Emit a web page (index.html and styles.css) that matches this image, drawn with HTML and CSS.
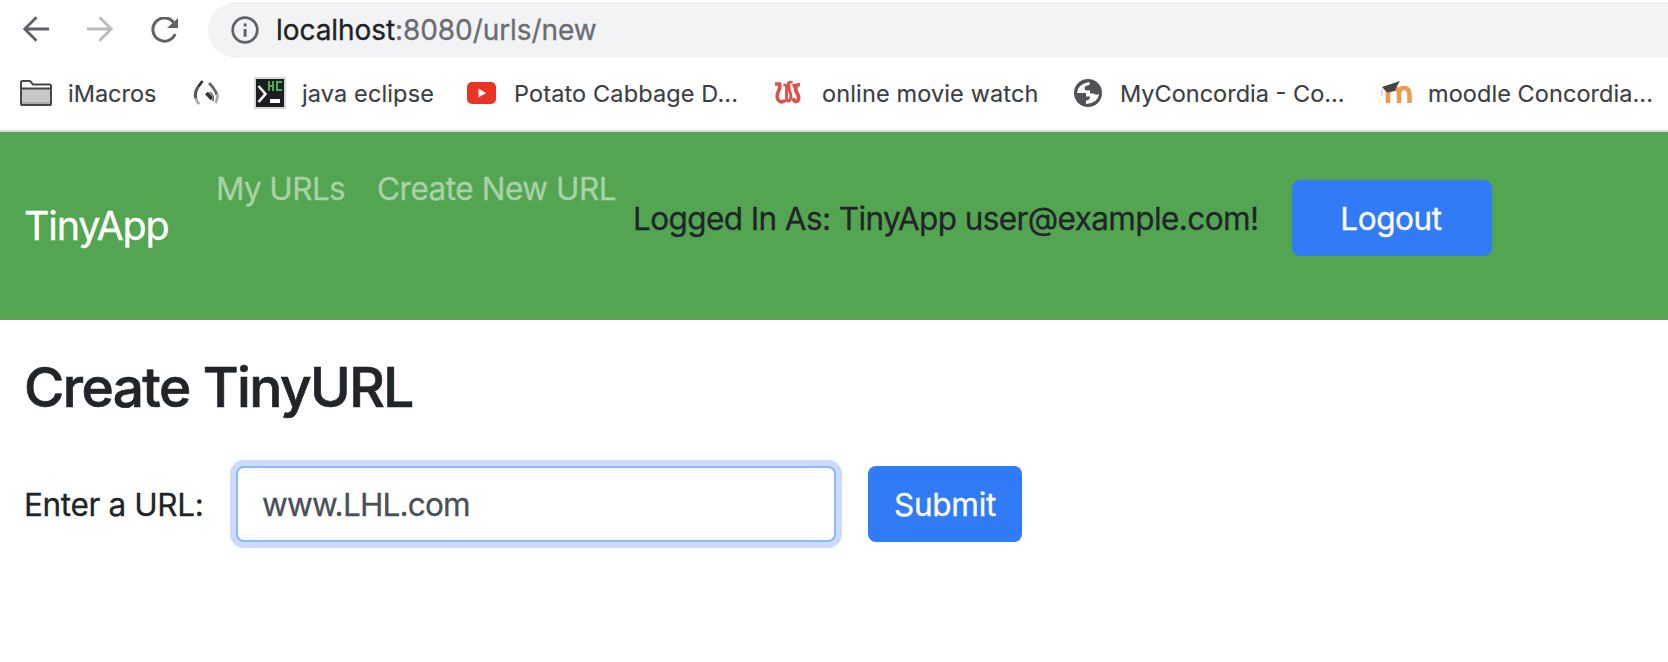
FILE: index.html
```html
<!DOCTYPE html>
<html lang="en">
<head>
<meta charset="utf-8">
<title>TinyApp</title>
<link rel="stylesheet" href="styles.css">
</head>
<body>
<div class="toolbar">
  <svg class="nav-icon back" width="26" height="26" viewBox="0 0 26 26" fill="none" stroke="#5f6368" stroke-width="2.8"><path d="M26 13H2M13.5 1.3L1.8 13l11.7 11.7"/></svg>
  <svg class="nav-icon forward" width="26" height="26" viewBox="0 0 26 26" fill="none" stroke="#babcbe" stroke-width="2.8"><path d="M0 13h24M12.5 1.3L24.2 13 12.5 24.7"/></svg>
  <svg class="nav-icon reload" width="28" height="27" viewBox="0 0 28 27"><path d="M22.5 5.2A11.6 11.6 0 1 0 24.2 17" fill="none" stroke="#5f6368" stroke-width="3"/><path d="M27 1v10H16z" fill="#5f6368"/></svg>
  <div class="omnibox">
    <svg width="28" height="28" viewBox="0 0 28 28"><circle cx="14" cy="14" r="12.3" fill="none" stroke="#5f6368" stroke-width="2.7"/><path d="M12.6 7.5h3v3h-3zM12.6 13h3v7.7h-3z" fill="#5f6368"/></svg>
    <span class="address"><span class="host">localhost</span>:8080/urls/new</span>
  </div>
</div>
<div class="bookmarks">
  <div class="bookmark imacros"><svg width="32" height="26" viewBox="0 0 32 26"><path d="M1 24V2.5Q1 1 2.500 1H10l3 3.500H29.500Q31 4.500 31 6V24Q31 25 30 25H2Q1 25 1 24z" fill="#fff" stroke="#474747" stroke-width="2"/><path d="M2 9h28v15H2z" fill="#c8c8c8"/><path d="M2 22h28v2H2z" fill="#aaa"/><path d="M1 8.500h30" stroke="#474747" stroke-width="2"/></svg><span>iMacros</span></div>
  <div class="bookmark leaf"><svg width="26" height="26" viewBox="0 0 26 26" fill="none"><path d="M9.500 1L5 7" stroke="#333" stroke-width="2.800"/><path d="M5 7Q1 13 3 19" stroke="#555" stroke-width="3"/><path d="M3 18Q3.500 22 6.500 24" stroke="#aaa" stroke-width="2.600"/><path d="M16 3Q22 9 24 15" stroke="#666" stroke-width="2.800"/><path d="M24 14Q25 19 22.500 23" stroke="#aaa" stroke-width="2.800"/><path d="M13.500 13L19 19" stroke="#333" stroke-width="4"/><path d="M17 12l3 4v5" stroke="#777" stroke-width="2"/></svg></div>
  <div class="bookmark java"><svg width="32" height="32" viewBox="0 0 32 32"><path d="M0 0h32v32H0z" fill="#d5d7d9"/><path d="M2 2h28v28H2z" fill="#1b1e23"/><path d="M4.500 9l7 8-7 8" fill="none" stroke="#fff" stroke-width="2.600"/><path d="M16 22h10v4H16z" fill="#fff"/><path d="M15 4v10M19 4v10M15 9h4M28 5h-5v8h5" fill="none" stroke="#4fae4b" stroke-width="2"/></svg><span>java eclipse</span></div>
  <div class="bookmark potato"><svg width="29" height="22" viewBox="0 0 29 22"><rect width="29" height="22" rx="5" fill="#ea3323"/><path d="M11.500 6.500v9l7.500-4.500z" fill="#fff"/></svg><span>Potato Cabbage D...</span></div>
  <div class="bookmark movie"><svg width="26" height="24" viewBox="0 0 26 24" fill="none" stroke="#dc524a"><path d="M0 3h4.500q1 3-.8 6.500-2.700 5-.7 9 3 4.500 7.500.5" stroke-width="3.600"/><path d="M8.500 3.500l3 1V17q1 5 3.500 2 2-4-.5-9l-1-8 4-1.500" stroke-width="2.800"/><path d="M17.500 5l7.500-1.500M21.500 5q-2 3.500.5 7 3 5 .5 8-3.500 1.500-4.500-3" stroke-width="3.800"/></svg><span>online movie watch</span></div>
  <div class="bookmark concordia"><svg width="28" height="28" viewBox="0 0 28 28"><circle cx="14" cy="14" r="14" fill="#505257"/><path d="M3 14Q4 5 15 3q2 2-1 3.500-3.500 0-3.500 3 0 2 2.500 2h3v3h4q1 2 5 .5-1 9-13 10v-3.500q4 0 4-4h-4v-3.500z" fill="#fff"/></svg><span>MyConcordia - Co...</span></div>
  <div class="bookmark moodle"><svg width="32" height="24" viewBox="0 0 32 24"><path d="M8 22V14q0-7 5.500-7T19 13v9M19 14q0-7 5-7t5.500 6v9" fill="none" stroke="#ec9b4f" stroke-width="4.600"/><path d="M2 6L20 0l-3 5-2 5-8 1.500z" fill="#444"/><path d="M2 8v7" stroke="#ead5cc" stroke-width="2"/></svg><span>moodle Concordia...</span></div>
</div>
<header class="navbar">
  <a class="brand">TinyApp</a>
  <nav class="links"><a class="my-urls">My URLs</a><a class="create-url">Create New URL</a></nav>
  <span class="account">Logged In As: TinyApp user@example.com!</span>
  <button class="btn logout"><span>Logout</span></button>
</header>
<main class="content">
  <h1>Create TinyURL</h1>
  <form class="url-form">
    <label for="url">Enter a URL:</label>
    <input id="url" type="text" value="www.LHL.com">
    <button class="btn submit" type="button"><span>Submit</span></button>
  </form>
</main>
</body>
</html>
```
FILE: styles.css
```css
* { box-sizing: border-box; }
body { margin: 0; background: #fff; color: #212529; font-family: Inter, "Liberation Sans", sans-serif; font-size: 31.5px; overflow: hidden; white-space: nowrap; -webkit-text-stroke: 0.3px currentColor; }
svg { display: block; flex: none; }
.toolbar { height: 62px; display: flex; align-items: flex-start; padding-top: 2px; }
.back { margin: 14px 0 0 23px; }
.forward { margin: 14px 0 0 38px; }
.reload { margin: 15px 0 0 38px; }
.omnibox { height: 56px; flex: 1; margin-left: 29px; padding-left: 23px; border-radius: 28px 0 0 28px; background: #f1f3f4; display: flex; align-items: center; gap: 17px; }
.address { font-size: 28px; line-height: 56px; color: #6b6d70; letter-spacing: -0.07px; }
.host { color: #202124; }
.bookmarks { height: 70px; border-bottom: 2px solid #dadce0; display: flex; align-items: center; padding: 0 0 6px 20px; font-size: 23.5px; color: #3c4043; letter-spacing: 0.13px; -webkit-text-stroke-width: 0.15px; }
.bookmark { display: flex; align-items: center; flex: none; }
.imacros { width: 173px; gap: 16px; letter-spacing: 0; }
.leaf { width: 61px; }
.java { width: 213px; gap: 16px; }
.potato { width: 308px; gap: 18px; }
.movie { width: 299px; gap: 21px; }
.concordia { width: 306px; gap: 18px; letter-spacing: 0; }
.moodle { gap: 16px; letter-spacing: 0.06px; }
.navbar { height: 188px; background: #54a551; display: flex; align-items: flex-start; padding-left: 24px; }
.brand { width: 192px; margin-top: 70px; font-size: 39.5px; line-height: 48px; color: #fff; letter-spacing: -1.2px; }
.links { width: 417px; display: flex; margin-top: 33px; line-height: 48px; color: #a9d2a8; }
.my-urls { width: 161px; letter-spacing: -0.6px; }
.create-url { letter-spacing: -0.47px; }
.account { width: 659px; margin-top: 63px; line-height: 48px; letter-spacing: -0.6px; }
.btn { border: 0; border-radius: 8px; background: #317bf6; color: #fff; height: 76px; padding: 0; font: inherit; -webkit-text-stroke: 0.3px currentColor; }
.logout { width: 200px; margin-top: 48px; padding-right: 2px; letter-spacing: -0.4px; }
.content { padding: 33px 24px; }
h1 { margin: 0; font-size: 55px; line-height: 68px; font-weight: 500; letter-spacing: -1.58px; -webkit-text-stroke-width: 0.7px; }
.url-form { display: flex; align-items: center; margin-top: 45px; }
label { width: 212px; letter-spacing: -0.37px; }
input { width: 600px; height: 76px; padding: 0 24px; border: 2px solid #8ab9f9; border-radius: 8px; box-shadow: 0 0 0 6px #cddcfe; outline: 0; font: inherit; color: #495057; letter-spacing: -0.8px; }
.submit { width: 154px; margin-left: 32px; letter-spacing: -0.25px; }
```
